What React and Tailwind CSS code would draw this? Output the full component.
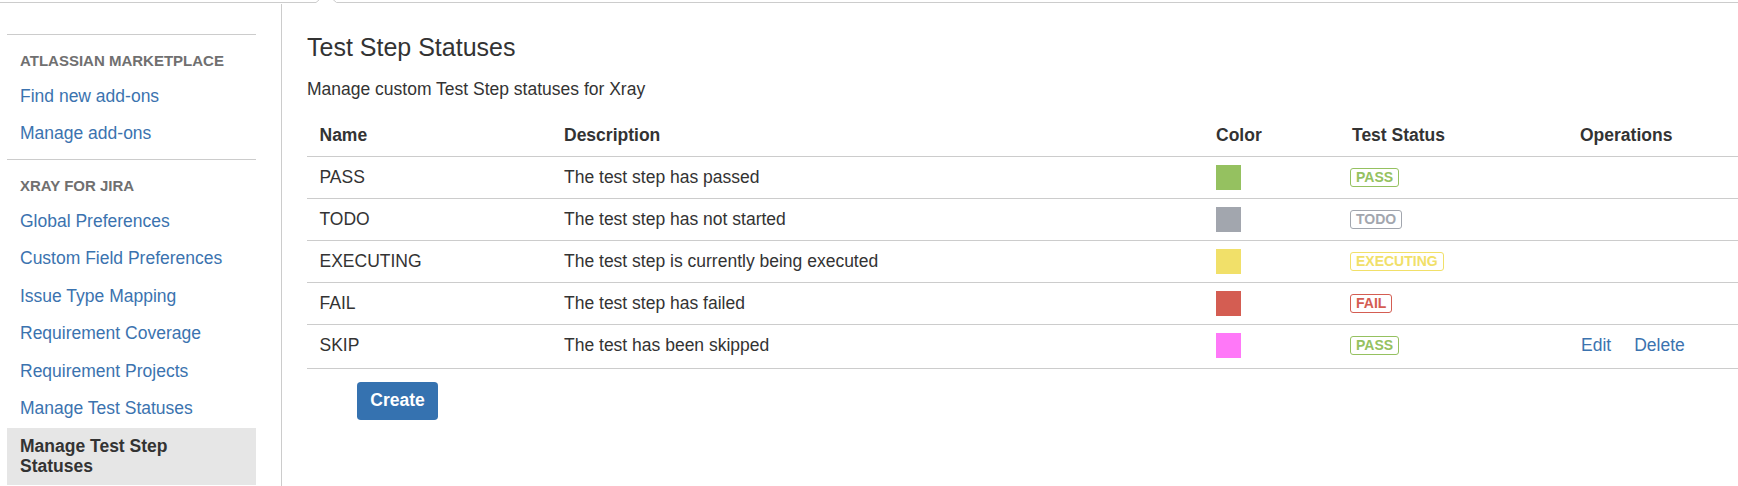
import React from 'react';

const font = { fontFamily: '"Liberation Sans", Arial, sans-serif' };

const groups = [
    {
        title: 'Atlassian Marketplace',
        items: ['Find new add-ons', 'Manage add-ons'],
    },
    {
        title: 'Xray for Jira',
        items: [
            'Global Preferences',
            'Custom Field Preferences',
            'Issue Type Mapping',
            'Requirement Coverage',
            'Requirement Projects',
            'Manage Test Statuses',
            'Manage Test Step Statuses',
        ],
        active: 'Manage Test Step Statuses',
    },
];

const statuses = [
    { name: 'PASS', desc: 'The test step has passed', swatch: 'bg-[#95c160]', tag: 'PASS', tagCls: 'text-[#95c160] border-[#95c160]' },
    { name: 'TODO', desc: 'The test step has not started', swatch: 'bg-[#a2a6ae]', tag: 'TODO', tagCls: 'text-[#a2a6ae] border-[#a2a6ae]' },
    { name: 'EXECUTING', desc: 'The test step is currently being executed', swatch: 'bg-[#f1e069]', tag: 'EXECUTING', tagCls: 'text-[#f1e069] border-[#f1e069]' },
    { name: 'FAIL', desc: 'The test step has failed', swatch: 'bg-[#d45d52]', tag: 'FAIL', tagCls: 'text-[#d45d52] border-[#d45d52]' },
    { name: 'SKIP', desc: 'The test has been skipped', swatch: 'bg-[#ff78f8]', tag: 'PASS', tagCls: 'text-[#95c160] border-[#95c160]', editable: true },
];

const cols = 'grid grid-cols-[244.5px_652px_136px_228px_1fr]';

function Sidebar() {
    return (
        <aside className="w-[282px] shrink-0 border-r border-[#cccccc] pl-[7px] pt-[30px]">
            <div className="w-[249px]">
                {groups.map(group => (
                    <div key={group.title} className="border-t border-[#cccccc] mb-[7px]">
                        <h3 className="pt-[16.5px] pb-[7.75px] px-[13px] text-[15px] leading-[18px] font-bold uppercase text-[#707070]">
                            {group.title}
                        </h3>
                        <ul>
                            {group.items.map(item => (
                                <li key={item}
                                    className={item === group.active
                                        ? 'pt-[9.5px] pb-[9.25px] px-[13px] text-[17.5px] leading-[19.5px] font-bold text-[#333333] bg-[#e6e6e6] pr-[80px]'
                                        : 'py-[9.25px] px-[13px] text-[17.5px] leading-[19px] text-[#3b73af]'}>
                                    {item}
                                </li>
                            ))}
                        </ul>
                    </div>
                ))}
            </div>
        </aside>
    );
}

export default function App() {
    return (
        <div className="min-h-screen bg-white text-[#333333] overflow-hidden" style={font}>
            {/* top edge with pointer notch */}
            <svg className="block w-full h-[4px]" viewBox="0 0 1738 4" preserveAspectRatio="none">
                <polyline points="0,2.5 316,2.5 319.5,-0.5 333,-0.5 336.5,2.5 1738,2.5"
                    fill="none" stroke="#cccccc" strokeWidth="1" />
            </svg>

            <div className="flex min-h-[482px]">
                <Sidebar />

                {/* Main content */}
                <main className="flex-1 pl-[25px] pt-[28px]">
                    <h2 className="text-[25px] leading-[30px] font-normal text-[#333333]">Test Step Statuses</h2>
                    <p className="mt-[15px] text-[17.5px] leading-[25px]">Manage custom Test Step statuses for Xray</p>

                    <div className="mt-[13px] text-[17.5px] leading-[25px]">
                        <div className={`${cols} font-bold border-b border-[#cccccc]`}>
                            {['Name', 'Description', 'Color', 'Test Status', 'Operations'].map(h => (
                                <div key={h} className="px-[12.5px] py-[8px]">{h}</div>
                            ))}
                        </div>

                        {statuses.map(s => (
                            <div key={s.name} className={`${cols} border-b border-[#cccccc] ${s.editable ? 'pb-[2px]' : ''}`}>
                                <div className="px-[12.5px] py-[8px]">{s.name}</div>
                                <div className="px-[12.5px] py-[8px]">{s.desc}</div>
                                <div className="px-[12.5px] py-[8px]">
                                    <div className={`w-[25px] h-[25px] ${s.swatch}`} />
                                </div>
                                <div className="px-[10.5px] py-[8px]">
                                    <div className="h-[25px] flex items-center">
                                        <span className={`h-[19px] px-[5px] border rounded-[3px] text-[14px] leading-[17px] font-bold uppercase ${s.tagCls}`}>
                                            {s.tag}
                                        </span>
                                    </div>
                                </div>
                                <div className="px-[13.5px] py-[8px] text-[#3b73af]">
                                    {s.editable && (
                                        <>
                                            <a href="#">Edit</a>
                                            <a href="#" className="ml-[23px]">Delete</a>
                                        </>
                                    )}
                                </div>
                            </div>
                        ))}
                    </div>

                    <button className="mt-[13px] ml-[50px] h-[37.5px] px-[13.25px] rounded-[3.75px] bg-[#3572b0] text-white text-[17.5px] font-bold leading-[25px]">
                        Create
                    </button>
                </main>
            </div>
        </div>
    );
}
